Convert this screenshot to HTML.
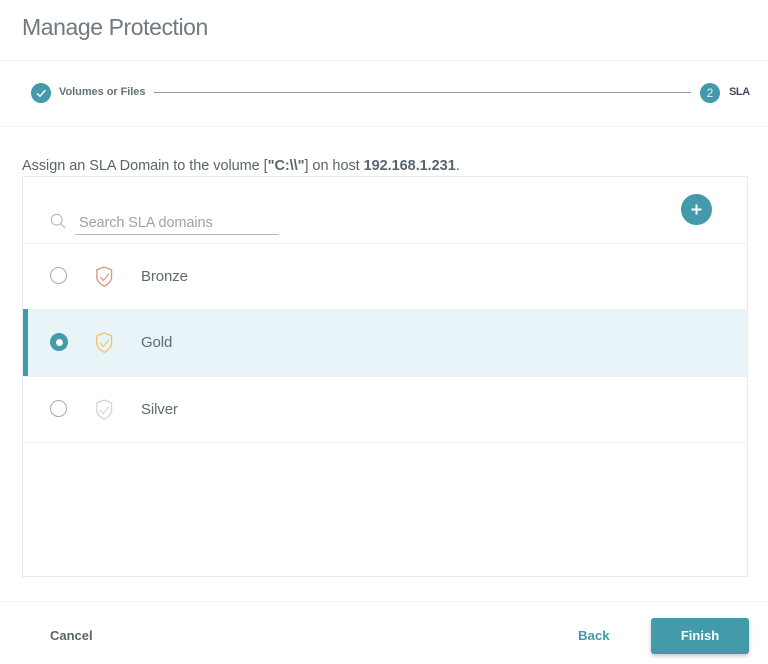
<!DOCTYPE html>
<html>
<head>
<meta charset="utf-8">
<style>
html,body{margin:0;padding:0;background:#fff;}
body{width:768px;height:664px;position:relative;overflow:hidden;font-family:"Liberation Sans",sans-serif;color:#5f6b73;}
.a{position:absolute;white-space:nowrap;}
.hr{position:absolute;height:1px;background:#eeeff0;}
.radio{position:absolute;left:50px;width:15px;height:15px;border:1.5px solid #a3adb3;border-radius:50%;box-sizing:content-box;}
.row-t{position:absolute;left:141px;font-size:15px;color:#5f6b70;letter-spacing:-.12px;line-height:18px;}
svg{position:absolute;overflow:visible;}
</style>
</head>
<body>
<div class="a" style="left:22px;top:13px;font-size:23px;line-height:28px;color:#6f7a80;letter-spacing:-.42px;">Manage Protection</div>
<div class="hr" style="left:0;top:60px;width:768px;"></div>

<div class="a" style="left:31px;top:83px;width:20px;height:20px;border-radius:50%;background:#429aaa;"></div>
<svg style="left:31px;top:83px;" width="20" height="20"><path d="M6 10.5 L9 13.2 L14.3 7.3" fill="none" stroke="#fff" stroke-width="1.5"/></svg>
<div class="a" style="left:59px;top:85px;font-size:11px;line-height:14px;font-weight:bold;letter-spacing:-.05px;color:#667177;">Volumes or Files</div>
<div class="a" style="left:154px;top:92px;width:537px;height:1px;background:#8f9ea3;"></div>
<div class="a" style="left:700px;top:83px;width:20px;height:20px;border-radius:50%;background:#429aaa;color:#e6f3f5;font-size:12px;line-height:21px;text-align:center;">2</div>
<div class="a" style="left:729px;top:85px;font-size:11px;line-height:14px;font-weight:bold;letter-spacing:-.4px;color:#3f4c58;">SLA</div>
<div class="hr" style="left:0;top:126px;width:768px;"></div>

<div class="a" style="left:22px;top:157px;font-size:14.5px;line-height:18px;letter-spacing:-.05px;color:#5a656b;">Assign an SLA Domain to the volume [<b>"C:\\"</b>] on host <b>192.168.1.231</b>.</div>

<div class="a" style="left:22px;top:176px;width:726px;height:401px;border:1px solid #e9ebec;box-sizing:border-box;"></div>

<svg style="left:50px;top:213px;" width="16" height="16"><circle cx="6.7" cy="6.7" r="5.4" fill="none" stroke="#b3bbbf" stroke-width="1.1"/><path d="M10.7 10.7 L15 15" stroke="#b3bbbf" stroke-width="1.1"/></svg>
<div class="a" style="left:79px;top:214px;font-size:14.5px;line-height:18px;color:#9aa4aa;letter-spacing:-.1px;">Search SLA domains</div>
<div class="a" style="left:75px;top:234px;width:204px;height:1px;background:#b4bcc2;"></div>

<div class="a" style="left:681px;top:194px;width:31px;height:31px;border-radius:50%;background:#429aaa;"></div>
<svg style="left:681px;top:194px;" width="31" height="31"><path d="M15.5 10.5 V20.5 M10.5 15.5 H20.5" stroke="#fff" stroke-width="2"/></svg>

<div class="hr" style="left:23px;top:243px;width:724px;"></div>

<div class="radio" style="top:267px;"></div>
<svg style="left:96px;top:266px;" width="17" height="21"><path d="M8.2 1 L15.6 3.8 V11 C15.6 15 12.5 18 8.2 20.3 C3.9 18 0.8 15 0.8 11 V3.8 Z" fill="none" stroke="#d8987f" stroke-width="1.3"/><path d="M4.2 11 L7.4 14.5 L13 7.5" fill="none" stroke="#d8987f" stroke-width="1.1"/></svg>
<div class="row-t" style="top:268px;">Bronze</div>

<div class="a" style="left:23px;top:309px;width:724px;height:67px;background:#e8f4f7;"></div>
<div class="a" style="left:23px;top:309px;width:5px;height:67px;background:#429aaa;"></div>
<div class="a" style="left:50px;top:333px;width:18px;height:18px;border-radius:50%;background:#429aaa;"></div>
<div class="a" style="left:55.5px;top:338.5px;width:7px;height:7px;border-radius:50%;background:#fff;"></div>
<svg style="left:96px;top:332px;" width="17" height="21"><path d="M8.2 1 L15.6 3.8 V11 C15.6 15 12.5 18 8.2 20.3 C3.9 18 0.8 15 0.8 11 V3.8 Z" fill="none" stroke="#f0c462" stroke-width="1.3"/><path d="M4.2 11 L7.4 14.5 L13 7.5" fill="none" stroke="#f0c462" stroke-width="1.1"/></svg>
<div class="row-t" style="top:334px;">Gold</div>

<div class="hr" style="left:23px;top:376px;width:724px;"></div>

<div class="radio" style="top:400px;"></div>
<svg style="left:96px;top:399px;" width="17" height="21"><path d="M8.2 1 L15.6 3.8 V11 C15.6 15 12.5 18 8.2 20.3 C3.9 18 0.8 15 0.8 11 V3.8 Z" fill="none" stroke="#d3d6d7" stroke-width="1.3"/><path d="M4.2 11 L7.4 14.5 L13 7.5" fill="none" stroke="#d3d6d7" stroke-width="1.1"/></svg>
<div class="row-t" style="top:401px;">Silver</div>

<div class="hr" style="left:23px;top:442px;width:724px;"></div>

<div class="hr" style="left:0;top:601px;width:768px;"></div>

<div class="a" style="left:50px;top:627px;font-size:13px;line-height:17px;font-weight:bold;color:#5a656b;">Cancel</div>
<div class="a" style="left:578px;top:627px;font-size:13.2px;line-height:17px;font-weight:bold;color:#429aaa;">Back</div>
<div class="a" style="left:651px;top:618px;width:98px;height:36px;border-radius:3px;background:#429aaa;box-shadow:0 2px 4px rgba(0,0,0,.22);color:#fff;font-size:13px;font-weight:bold;line-height:36px;text-align:center;">Finish</div>
</body>
</html>
